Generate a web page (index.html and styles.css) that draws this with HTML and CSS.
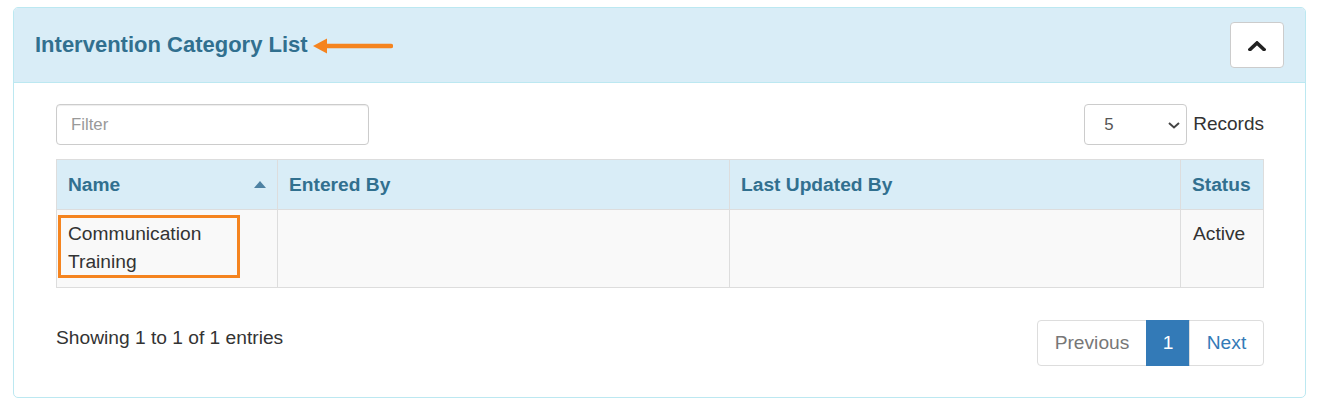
FILE: index.html
```html
<!DOCTYPE html>
<html lang="en">
<head>
<meta charset="utf-8">
<title>Intervention Category List</title>
<link rel="stylesheet" href="styles.css">
</head>
<body>
<div class="panel">
  <div class="panel-heading">
    <div class="title-wrap">
      <h3 class="panel-title">Intervention Category List</h3>
      <svg class="annot-arrow" width="80" height="16" viewBox="0 0 80 16">
        <path d="M0 8 L14 0.5 L14 15.5 Z" fill="#f5841f"/>
        <line x1="12" y1="8" x2="78" y2="8" stroke="#f5841f" stroke-width="4.5" stroke-linecap="round"/>
      </svg>
    </div>
    <button class="collapse-btn" type="button" aria-label="Collapse">
      <svg width="18" height="10" viewBox="0 0 18 10">
        <polyline points="2,8.5 9,2 16,8.5" fill="none" stroke="#222" stroke-width="3.6" stroke-linecap="square"/>
      </svg>
    </button>
  </div>
  <div class="panel-body">
    <div class="toolbar">
      <input class="filter" type="text" placeholder="Filter">
      <div class="records">
        <div class="select">
          <span>5</span>
          <svg width="12" height="7" viewBox="0 0 12 7">
            <polyline points="1,1 6,5.5 11,1" fill="none" stroke="#444" stroke-width="2"/>
          </svg>
        </div>
        <span class="records-label">Records</span>
      </div>
    </div>
    <table class="grid">
      <colgroup>
        <col class="c1"><col class="c2"><col class="c3"><col class="c4">
      </colgroup>
      <thead>
        <tr>
          <th><div class="th-sort"><span>Name</span><span class="caret"></span></div></th>
          <th>Entered By</th>
          <th>Last Updated By</th>
          <th>Status</th>
        </tr>
      </thead>
      <tbody>
        <tr>
          <td class="name-cell"><div class="highlight">Communication<br>Training</div></td>
          <td></td>
          <td></td>
          <td class="status-cell">Active</td>
        </tr>
      </tbody>
    </table>
    <div class="footer">
      <div class="info">Showing 1 to 1 of 1 entries</div>
      <ul class="pagination">
        <li class="pg prev">Previous</li>
        <li class="pg active">1</li>
        <li class="pg next">Next</li>
      </ul>
    </div>
  </div>
</div>
</body>
</html>
```
FILE: styles.css
```css
* { box-sizing: border-box; }
html, body { background: #fff; }
body {
  margin: 0;
  padding: 7px 12px 0 13px;
  font-family: "Liberation Sans", Arial, sans-serif;
  font-size: 19.2px;
  line-height: 1.42857;
  color: #333;
}
.panel {
  border: 1px solid #bce8f1;
  border-radius: 5px;
  background: #fff;
  height: 391px;
}
.panel-heading {
  background: #d9edf7;
  border-bottom: 1px solid #bce8f1;
  border-radius: 4px 4px 0 0;
  padding: 14px 21px 14px 21px;
  height: 75px;
  display: flex;
  align-items: center;
  justify-content: space-between;
}
.title-wrap { display: flex; align-items: center; margin-top: 1px; }
.panel-title {
  margin: 0;
  font-size: 22px;
  font-weight: bold;
  color: #31708f;
  line-height: 1.1;
}
.annot-arrow { margin-left: 5px; margin-top: 1px; display: block; }
.collapse-btn {
  width: 54px;
  height: 46px;
  background: #fff;
  border: 1px solid #ccc;
  border-radius: 4px;
  padding: 0;
  display: flex;
  align-items: center;
  justify-content: center;
}
.collapse-btn svg { display: block; margin-top: 1px; }
.panel-body { padding: 21px 41px 0 42px; }
.toolbar {
  display: flex;
  justify-content: space-between;
  align-items: center;
  height: 41px;
}
.filter {
  width: 313px;
  height: 41px;
  border: 1px solid #ccc;
  border-radius: 4px;
  padding: 0 14px;
  font-family: "Liberation Sans", Arial, sans-serif;
  font-size: 16.8px;
  color: #555;
  box-shadow: inset 0 1px 1px rgba(0,0,0,.075);
}
.filter::placeholder { color: #999; }
.records { display: flex; align-items: center; }
.select {
  width: 103px;
  height: 41px;
  border: 1px solid #ccc;
  border-radius: 4px;
  display: flex;
  align-items: center;
  justify-content: space-between;
  padding: 0 6px 0 19px;
  font-size: 16.8px;
  color: #555;
}
.select svg { display: block; margin-top: 1px; }
.records-label { margin-left: 6px; font-size: 19px; color: #333; margin-top: -1px; }
.grid {
  margin-top: 14px;
  width: 100%;
  border-collapse: collapse;
  table-layout: fixed;
}
col.c1 { width: 221px; }
col.c2 { width: 452px; }
col.c3 { width: 451px; }
col.c4 { width: auto; }
.grid th, .grid td {
  border: 1px solid #ddd;
  text-align: left;
  vertical-align: top;
}
.grid thead tr { background: #d9edf7; }
.grid th {
  color: #31708f;
  font-weight: bold;
  height: 50px;
  padding: 11px 11px 0 11px;
  vertical-align: top;
}
.th-sort { display: flex; justify-content: space-between; align-items: center; }
.caret {
  width: 0; height: 0;
  border-left: 6.5px solid transparent;
  border-right: 6.5px solid transparent;
  border-bottom: 7px solid #4e82a3;
}
.grid tbody tr { background: #f9f9f9; }
.grid td { padding: 7px 12px; height: 78px; }
.grid td.name-cell { padding: 5px 1px 8px 1px; }
.highlight {
  border: 3px solid #f5841f;
  width: 182px;
  height: 63px;
  padding: 2px 8px 0 7px;
  line-height: 27.5px;
}
.grid td.status-cell { padding-top: 10px; line-height: 27px; }
.footer {
  display: flex;
  justify-content: space-between;
  align-items: flex-start;
  margin-top: 32px;
}
.info { margin-top: 4px; line-height: 27px; }
.pagination {
  list-style: none;
  margin: 0;
  padding: 0;
  display: flex;
}
.pg {
  height: 46px;
  line-height: 44px;
  border: 1px solid #ddd;
  color: #337ab7;
  text-align: center;
}
.pg.prev { width: 110px; border-radius: 4px 0 0 4px; color: #777; }
.pg.active {
  width: 44px;
  background: #337ab7;
  border-color: #337ab7;
  color: #fff;
  margin-left: -1px;
}
.pg.next { width: 75px; border-radius: 0 4px 4px 0; margin-left: -1px; }
```
